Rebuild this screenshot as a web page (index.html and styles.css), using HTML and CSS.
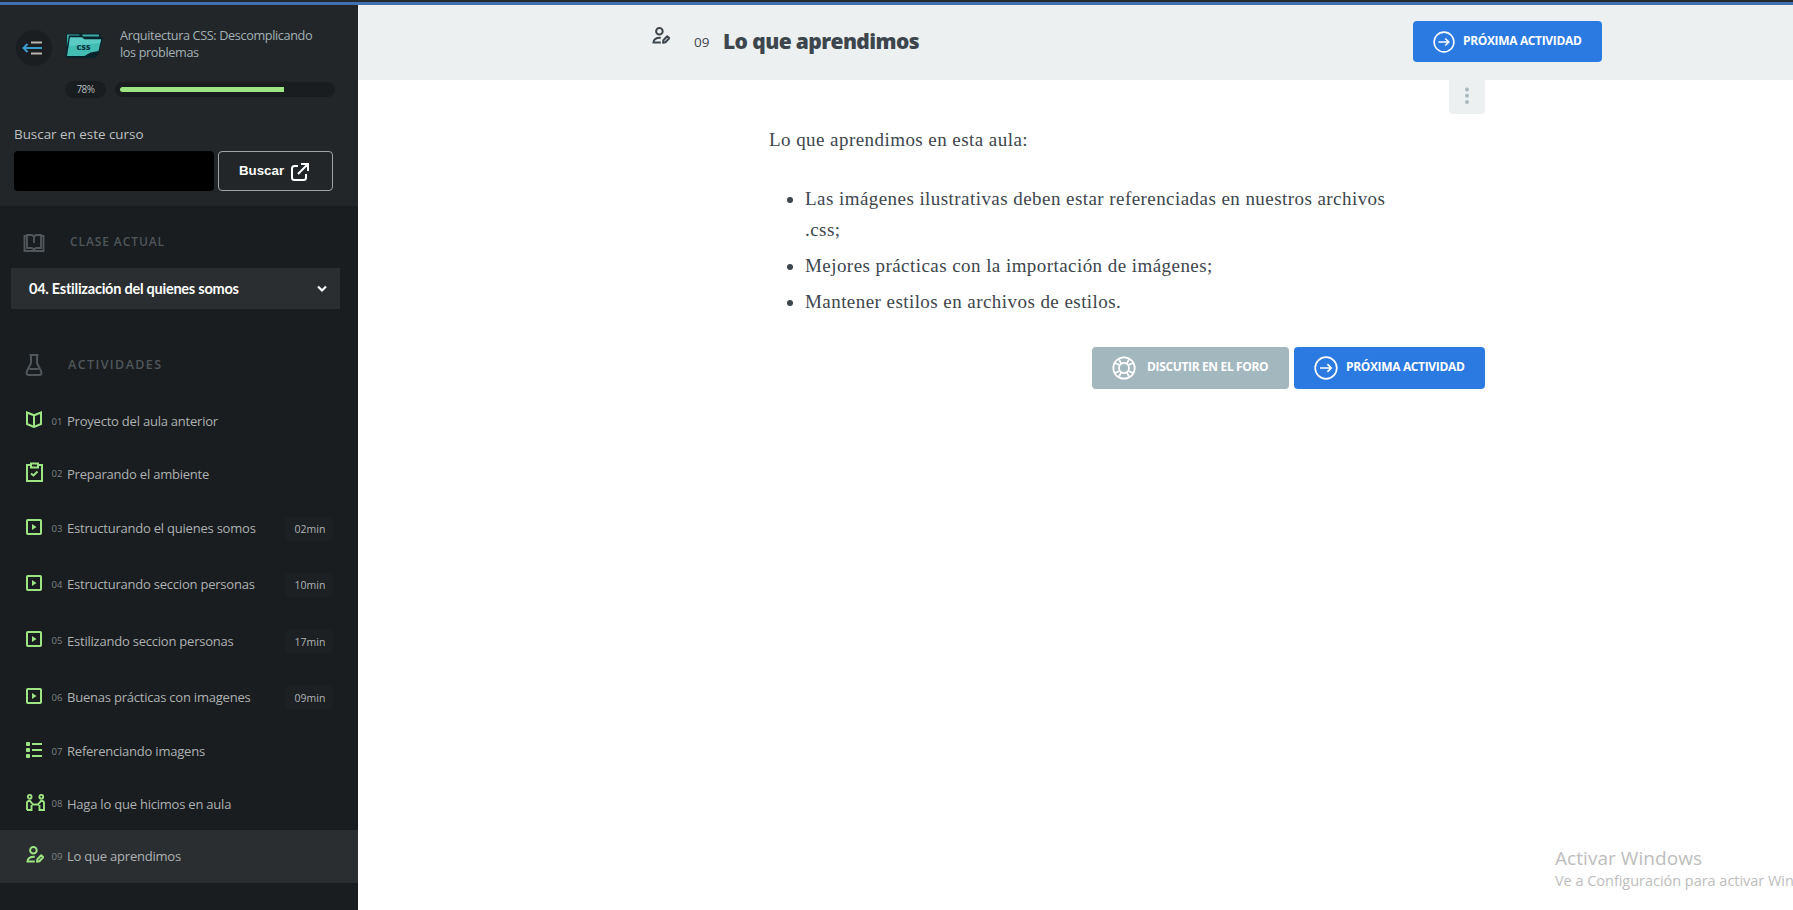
FILE: index.html
```html
<!DOCTYPE html>
<html lang="es">
<head>
<meta charset="utf-8">
<title>Lo que aprendimos</title>
<link rel="stylesheet" href="styles.css">
</head>
<body>
<svg width="0" height="0" class="defs">
  <symbol id="play" viewBox="0 0 16 16"><rect x="1" y="1" width="14" height="14" rx=".8" fill="none" stroke="currentColor" stroke-width="2"/><path d="M6 5v6l4.500-3z" fill="currentColor"/></symbol>
  <symbol id="person" viewBox="0 0 18 17"><g fill="none" stroke="currentColor" stroke-width="2"><circle cx="7.400" cy="4.300" r="3.300"/><path d="M8.800 15.400H1.500c.2-3.400 2-4.900 7.300-4.700"/><path d="M11 15.800l.4-2.600 3.800-4 2 2-3.800 4z" stroke-linejoin="round"/></g></symbol>
  <symbol id="next" viewBox="0 0 24 24"><g fill="none" stroke="currentColor" stroke-width="1.700"><circle cx="12" cy="12" r="10.800"/><path d="M6 12h11M13.400 8.200l3.800 3.800-3.800 3.800"/></g></symbol>
</svg>
<div class="topline"></div>
<div class="page">
  <aside class="sidebar">
    <header class="course">
      <div class="course-row">
        <a class="back"><svg width="22" height="16" viewBox="0 0 22 16"><path d="M9 2.500h11M9 13.500h11" stroke="#b9b4ad" stroke-width="2.200"/><path d="M1 8h19M5.500 4L1.500 8l4 4" fill="none" stroke="#3d9bcb" stroke-width="2"/></svg></a>
        <svg class="folder" width="38" height="25" viewBox="0 0 38 25"><path d="M1 .5h34.500V4H38l-4 16-4 5H.500L1 18z" fill="#07242c"/><path d="M2 1.500h12l1 1H4L1.800 14zM17 1.500h17v2H18z" fill="#3fa9a3"/><path d="M5 4.500h12l2.500 2H36L33.500 18l-8 1.500-6 3.500H2z" fill="#43bdb4"/><path d="M5 4.500h12l2.500 2H36L35 10 4 13z" fill="#59cbc2"/><text x="18.500" y="17" class="folder-text">CSS</text></svg>
        <h2 class="course-title">Arquitectura CSS: Descomplicando<br>los problemas</h2>
      </div>
      <div class="progress"><span class="percent">78%</span><div class="track"><div class="fill" style="width:78%"></div></div></div>
      <label class="search-label">Buscar en este curso</label>
      <div class="search"><div class="search-input"></div><button class="search-btn"><span>Buscar</span><svg width="20" height="20" viewBox="0 0 20 20"><path d="M8 4H4.500Q2 4 2 6.500v9Q2 18 4.500 18h9q2.500 0 2.500-2.500V12M11 2h7v7M17.500 2.500L8 12" fill="none" stroke="#fff" stroke-width="2"/></svg></button></div>
    </header>
    <div class="section section-class"><svg width="22" height="20" viewBox="0 0 22 20"><path d="M4 3H1.500v15h19V3H18M4 15V2h5l2 1.500L13 2h5v13h-5l-2 1.500L9 15zM11 3.500V10" fill="none" stroke="currentColor" stroke-width="1.900"/></svg><span>CLASE ACTUAL</span></div>
    <div class="select"><span>04. Estilización del quienes somos</span><svg width="12" height="8" viewBox="0 0 12 8"><path d="M2 1.500l4 4 4-4" fill="none" stroke="#fff" stroke-width="2.200"/></svg></div>
    <div class="section section-act"><svg width="18" height="24" viewBox="0 0 18 24"><path d="M4.500 2h9M6 2v8L2 18q-1.500 4 2 4h10q3.500 0 2-4l-4-8V2M4.500 16h9" fill="none" stroke="currentColor" stroke-width="2"/></svg><span>ACTIVIDADES</span></div>
    <nav class="tasks">
      <a class="task"><svg width="16" height="17" viewBox="0 0 16 17"><path d="M1 1.500l7 2.800 7-2.800V13l-7 3-7-3zM8 4v12" fill="none" stroke="currentColor" stroke-width="2"/></svg><i>01</i><span>Proyecto del aula anterior</span></a>
      <a class="task"><svg width="17" height="20" viewBox="0 0 17 20"><path d="M4 3H1v16h15V3h-3M5 1.500h7v4H5zM5 11.500l2.500 2 4-4" fill="none" stroke="currentColor" stroke-width="2"/></svg><i>02</i><span>Preparando el ambiente</span></a>
      <a class="task video"><svg width="16" height="16"><use href="#play"/></svg><i>03</i><span>Estructurando el quienes somos</span><b>02min</b></a>
      <a class="task video"><svg width="16" height="16"><use href="#play"/></svg><i>04</i><span>Estructurando seccion personas</span><b>10min</b></a>
      <a class="task video"><svg width="16" height="16"><use href="#play"/></svg><i>05</i><span>Estilizando seccion personas</span><b>17min</b></a>
      <a class="task video"><svg width="16" height="16"><use href="#play"/></svg><i>06</i><span>Buenas prácticas con imagenes</span><b>09min</b></a>
      <a class="task"><svg width="16" height="16" viewBox="0 0 16 16" fill="currentColor"><rect width="4" height="4" rx=".8"/><rect y="6" width="4" height="4" rx=".8"/><rect y="12" width="4" height="4" rx=".8"/><path d="M6 1h10v2H6zM6 7h10v2H6zM6 13h10v2H6z"/></svg><i>07</i><span>Referenciando imagens</span></a>
      <a class="task"><svg width="19" height="17" viewBox="0 0 19 17"><g fill="none" stroke="currentColor" stroke-width="1.900"><circle cx="3.700" cy="2.800" r="1.900"/><circle cx="15.300" cy="2.800" r="1.900"/><path d="M1 16V9q0-2 2-2h1l3 3.500h5L15 7h1q2 0 2 2v7h-4.500v-5M1 16h4.500v-5"/></g></svg><i>08</i><span>Haga lo que hicimos en aula</span></a>
      <a class="task active"><svg width="18" height="17"><use href="#person"/></svg><i>09</i><span>Lo que aprendimos</span></a>
    </nav>
  </aside>
  <main class="main">
    <header class="main-head">
      <svg class="head-icon" width="18" height="17"><use href="#person"/></svg>
      <span class="head-num">09</span>
      <h1 class="head-title">Lo que aprendimos</h1>
      <a class="btn"><svg width="22" height="22"><use href="#next"/></svg><span>PRÓXIMA ACTIVIDAD</span></a>
    </header>
    <div class="body">
      <div class="kebab"><svg width="6" height="18" viewBox="0 0 6 18" fill="#a9b8bc"><circle cx="3" cy="2.500" r="2"/><circle cx="3" cy="8.800" r="2"/><circle cx="3" cy="15" r="2"/></svg></div>
      <div class="text">
        <p class="intro">Lo que aprendimos en esta aula:</p>
        <ul class="list">
          <li>Las imágenes ilustrativas deben estar referenciadas en nuestros archivos<br>.css;</li>
          <li>Mejores prácticas con la importación de imágenes;</li>
          <li>Mantener estilos en archivos de estilos.</li>
        </ul>
      </div>
      <div class="actions">
        <a class="btn forum"><svg width="24" height="24" viewBox="0 0 24 24"><g fill="none" stroke="currentColor" stroke-width="1.800"><circle cx="12" cy="12" r="10.700"/><circle cx="12" cy="12" r="5"/><path d="M7 3l2 4.500M3 7l4.500 2M17 3l-2 4.500M21 7l-4.500 2M7 21l2-4.500M3 17l4.500-2M17 21l-2-4.500M21 17l-4.500-2"/></g></svg><span>DISCUTIR EN EL FORO</span></a>
        <a class="btn next"><svg width="24" height="24"><use href="#next"/></svg><span>PRÓXIMA ACTIVIDAD</span></a>
      </div>
    </div>
  </main>
</div>
<div class="watermark"><div class="wm-title">Activar Windows</div><div class="wm-sub">Ve a Configuración para activar Win</div></div>
</body>
</html>
```
FILE: styles.css
```css
* { box-sizing: border-box; }
body { margin: 0; height: 910px; overflow: hidden; background: #fff; font-family: "Open Sans", "Noto Sans", sans-serif; display: flex; flex-direction: column; }
h1, h2, p, ul { margin: 0; padding: 0; }
svg { flex: none; display: block; }
.defs { position: absolute; }
.topline { height: 5px; flex: none; background: #4271b2; border-top: 2px solid #24292b; }
.page { display: flex; flex: 1; min-height: 0; }

/* Sidebar */
.sidebar { width: 358px; flex: none; background: #191d1f; display: flex; flex-direction: column; }
.course { height: 201px; background: #222628; padding: 21px 0 0 14px; flex: none; }
.course-row { display: flex; height: 55px; padding-left: 2px; }
.back { width: 36px; height: 36px; margin-top: 4px; border-radius: 50%; background: #1b1e20; display: flex; align-items: center; justify-content: center; padding-right: 2px; }
.folder { margin: 7px 17px 0 13px; }
.folder-text { font: 800 7.5px "Open Sans", sans-serif; fill: #06303a; text-anchor: middle; letter-spacing: .2px; }
.course-title { font-size: 12.7px; font-weight: 400; line-height: 17px; color: #a3b1b6; white-space: nowrap; letter-spacing: -.38px; padding-top: 1px; }
.progress { display: flex; align-items: center; height: 17px; margin-left: 51px; gap: 9px; }
.percent { width: 41px; height: 17px; border-radius: 9px; background: #191d1f; color: #b5babc; font-size: 10px; line-height: 17px; text-align: center; letter-spacing: -.5px; }
.track { width: 220px; height: 15px; border-radius: 8px; background: #191d1f; padding: 5px; }
.fill { height: 5px; background: #9de483; border-radius: 3px 0 0 3px; }
.search-label { display: block; margin-top: 26px; line-height: 20px; height: 27px; font-size: 13.4px; color: #bfc1c2; }
.search { display: flex; gap: 4px; }
.search-input { width: 200px; height: 40px; border-radius: 4px; background: #000; }
.search-btn { width: 115px; height: 40px; border: 1px solid #a0a2a3; border-radius: 4px; background: none; color: #fff; font: 700 13.3px "Liberation Sans", Arial, sans-serif; display: flex; align-items: center; padding: 0 0 0 20px; gap: 6px; }
.search-btn span { margin-top: -2px; }
.search-btn svg { margin-top: 2px; }

.section { display: flex; align-items: center; color: #50565a; font-size: 12px; font-weight: 600; letter-spacing: .9px; flex: none; }
.section-class { height: 62px; padding: 11px 0 0 23px; gap: 25px; }
.section-class span { padding-bottom: 3px; }
.select { width: 329px; height: 41px; flex: none; margin-left: 11px; padding: 0 12px 0 18px; background: #2a2e30; color: #fff; font: 700 14.5px Lato, sans-serif; letter-spacing: -.24px; display: flex; align-items: center; justify-content: space-between; }
.section-act { height: 86px; padding: 44px 0 0 25px; gap: 25px; align-items: flex-start; font-size: 12.500px; letter-spacing: 1.4px; }
.section-act span { line-height: 23px; }
.tasks { display: flex; flex-direction: column; flex: none; }
.task { height: 52.5px; display: grid; grid-template-columns: 25.500px 15.500px 218px 48px; align-items: center; padding-left: 26px; color: #aeb1b2; font-size: 13px; }
.task.video { height: 56.3px; }
.task svg { color: #9de483; margin-bottom: 3px; }
.task i { font-style: normal; font-size: 9.500px; color: #7f8385; }
.task span { white-space: nowrap; letter-spacing: -.22px; }
.task b { font-weight: 400; font-size: 10.500px; line-height: 24px; padding-left: 2px; text-align: center; background: #1c2022; border-radius: 3px; color: #b0b3b4; margin-top: 2px; }
.task.active { background: #2a2e30; }

/* Main content */
.main { flex: 1; min-width: 0; }
.main-head { height: 75px; background: #ecf0f1; display: flex; color: #3d464d; padding: 16px 191px 0 294px; }
.head-icon { margin-top: 6px; }
.head-num { font-size: 13.500px; line-height: 20px; margin: 11px 0 0 24px; width: 29px; }
.head-title { font-size: 21px; line-height: 28px; font-weight: 800; margin-top: 6px; letter-spacing: -.6px; white-space: nowrap; }
.btn { width: 189px; height: 41px; border-radius: 4px; background: #2a7ae2; color: #fff; display: flex; align-items: center; padding-left: 20px; gap: 8px; font-size: 12px; font-weight: 700; letter-spacing: -.35px; white-space: nowrap; }
.btn span { margin-top: -2px; }
.main-head .btn { margin-left: auto; }
.body { width: 716px; margin-left: 411px; }
.kebab { width: 36px; height: 34px; margin-left: auto; background: #ecf0f1; border-radius: 0 0 4px 4px; display: flex; justify-content: center; padding-top: 7px; }
.text { font-family: "Liberation Serif", serif; font-size: 19px; letter-spacing: .44px; color: #3d464d; line-height: 31.5px; padding-top: 10px; white-space: nowrap; }
.intro { margin-bottom: 27px; }
.list { padding-left: 36px; }
.list li { margin-bottom: 4.500px; }
.actions { display: flex; justify-content: flex-end; gap: 5px; margin-top: 29px; }
.actions .btn { height: 42px; width: 191px; }
.actions .forum { width: 197px; background: #a3b7bf; gap: 11px; }

/* System notice over the page */
.watermark { position: absolute; left: 1555px; top: 844px; color: #bdbdbd; white-space: nowrap; font-family: "Open Sans", sans-serif; }
.wm-title { font-size: 19px; line-height: 28px; letter-spacing: .05px; }
.wm-sub { font-size: 14.500px; line-height: 18px; letter-spacing: -.03px; }
```
